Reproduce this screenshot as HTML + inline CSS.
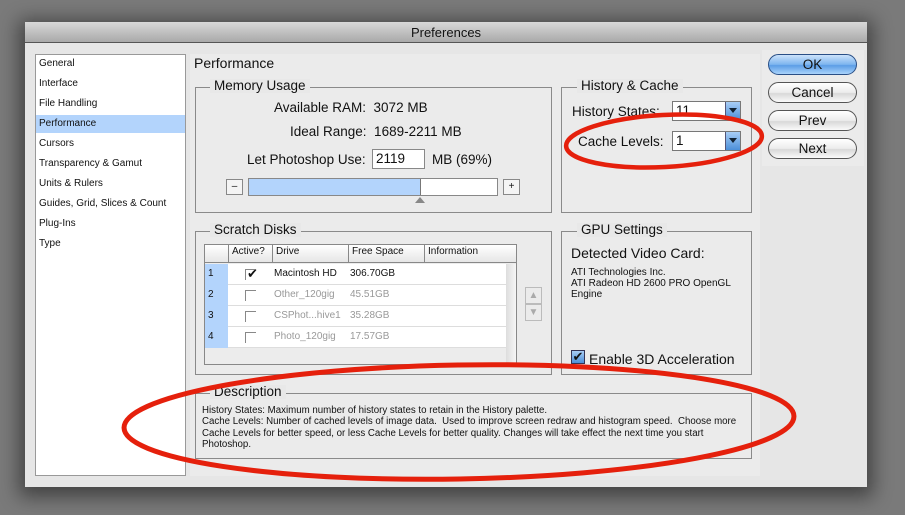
<!DOCTYPE html>
<html><head><meta charset="utf-8"><style>
*{margin:0;padding:0;box-sizing:border-box}
body{width:905px;height:515px;background:#7a7a7a;position:relative;overflow:hidden;font-family:"Liberation Sans","DejaVu Sans",sans-serif;color:#111}
.a{position:absolute}
.win{left:25px;top:22px;width:842px;height:465px;background:#e6e6e6;box-shadow:0 4px 18px 6px rgba(0,0,0,.45)}
.title{left:25px;top:22px;width:842px;height:21px;background:linear-gradient(#d8d8d8,#a9a9a9);border-bottom:1px solid #555;text-align:center;font-size:13px;line-height:21px;color:#111}
.list{left:35px;top:54px;width:151px;height:422px;background:#fff;border:1px solid #999}
.li{position:absolute;left:3px;font-size:10px;width:146px;height:18px;line-height:18px}
.box{position:absolute;border:1px solid #8a8a8a}
.lg{position:absolute;background:#e8e8e8;font-size:13.5px;padding:0 4px;line-height:14px}
.t13{font-size:13.5px;position:absolute;white-space:nowrap}
.t10{font-size:10px;position:absolute;white-space:nowrap}
.btn{position:absolute;left:768px;width:89px;height:21px;border:1px solid #555;border-radius:11px;background:linear-gradient(#fff,#ececec 50%,#d8d8d8 55%,#fafafa);text-align:center;font-size:13.5px;line-height:19px}
.sel{position:absolute;left:672px;width:69px;height:20px;border:1px solid #777;background:#fff;font-size:13.5px;line-height:18px;padding-left:3px}
.sel i{position:absolute;right:0;top:0;width:15px;height:18px;background:linear-gradient(#a8cdf5,#4c8fd9);border-left:1px solid #557}
.sel i:after{content:"";position:absolute;left:3px;top:6px;border:4px solid transparent;border-top:5px solid #123;}
.row{position:absolute;left:205px;width:301px;height:21px;border-bottom:1px solid #ddd;font-size:10px;line-height:20px}
.row b{position:absolute;left:0;width:23px;height:21px;background:#b3d4fc;font-weight:normal;padding-left:3px}
.cb{position:absolute;left:40px;top:5px;width:11px;height:11px;border-left:1px solid #888;border-top:1px solid #888}
</style></head><body>
<div class="a win"></div>
<div class="a title">Preferences</div>
<div class="a" style="left:190px;top:54px;width:570px;height:422px;background:#ebebeb"></div>
<div class="a" style="left:762px;top:50px;width:102px;height:116px;background:#ebebeb"></div>
<div class="a list">
<div class="li" style="top:0">General</div>
<div class="li" style="top:20px">Interface</div>
<div class="li" style="top:40px">File Handling</div>
<div class="li" style="top:60px;left:0;width:149px;padding-left:3px;background:#b3d4fc">Performance</div>
<div class="li" style="top:80px">Cursors</div>
<div class="li" style="top:100px">Transparency &amp; Gamut</div>
<div class="li" style="top:120px">Units &amp; Rulers</div>
<div class="li" style="top:140px">Guides, Grid, Slices &amp; Count</div>
<div class="li" style="top:160px">Plug-Ins</div>
<div class="li" style="top:180px">Type</div>
</div>
<div class="t13" style="left:194px;top:55px;font-size:14px">Performance</div>

<div class="box" style="left:195px;top:87px;width:357px;height:126px"></div>
<div class="lg" style="left:210px;top:79px">Memory Usage</div>
<div class="t13" style="left:274px;top:100px">Available RAM:&nbsp; 3072 MB</div>
<div class="t13" style="left:290px;top:124px">Ideal Range:&nbsp; 1689-2211 MB</div>
<div class="t13" style="left:247px;top:152px">Let Photoshop Use:</div>
<div class="a" style="left:372px;top:149px;width:53px;height:20px;background:#fff;border:1px solid #888;font-size:13.5px;padding-left:3px;line-height:18px">2119</div>
<div class="t13" style="left:432px;top:152px">MB (69%)</div>
<div class="a" style="left:226px;top:179px;width:17px;height:16px;border:1px solid #888;background:#f4f4f4;font-size:10px;text-align:center;line-height:13px">–</div>
<div class="a" style="left:248px;top:178px;width:250px;height:18px;border:1px solid #888;background:#fff"><div style="width:172px;height:16px;background:#b3d4fc;border-right:1px solid #777"></div></div>
<div class="a" style="left:415px;top:197px;border:5px solid transparent;border-bottom:6px solid #888;border-top:0"></div>
<div class="a" style="left:503px;top:179px;width:17px;height:16px;border:1px solid #888;background:#f4f4f4;font-size:10px;text-align:center;line-height:14px">+</div>

<div class="box" style="left:561px;top:87px;width:191px;height:126px"></div>
<div class="lg" style="left:577px;top:79px">History &amp; Cache</div>
<div class="t13" style="left:572px;top:104px">History States:</div>
<div class="sel" style="top:101px">11<i></i></div>
<div class="t13" style="left:578px;top:134px">Cache Levels:</div>
<div class="sel" style="top:131px">1<i></i></div>

<div class="btn" style="top:54px;border-color:#2a4f86;background:linear-gradient(#cde3fb,#7db5ef 50%,#5b9de6 55%,#a9d3fb)">OK</div>
<div class="btn" style="top:82px">Cancel</div>
<div class="btn" style="top:110px">Prev</div>
<div class="btn" style="top:138px">Next</div>

<div class="box" style="left:195px;top:231px;width:357px;height:144px"></div>
<div class="lg" style="left:210px;top:223px">Scratch Disks</div>
<div class="a" style="left:204px;top:244px;width:313px;height:121px;border:1px solid #888;background:#ececec"></div>
<div class="a" style="left:205px;top:245px;width:311px;height:18px;background:linear-gradient(#fff,#e6e6e6);border-bottom:1px solid #888;font-size:10px;line-height:14px">
<span class="a" style="left:23px;top:0;height:17px;border-left:1px solid #888;padding-left:3px">Active?</span>
<span class="a" style="left:67px;top:0;height:17px;border-left:1px solid #888;padding-left:3px">Drive</span>
<span class="a" style="left:143px;top:0;height:17px;border-left:1px solid #888;padding-left:3px">Free Space</span>
<span class="a" style="left:219px;top:0;height:17px;border-left:1px solid #888;padding-left:3px">Information</span>
</div>
<div class="a" style="left:205px;top:264px;width:301px;height:84px;background:#fff"></div>
<div class="a" style="left:506px;top:264px;width:10px;height:100px;background:linear-gradient(90deg,#ddd,#f6f6f6)"></div>
<div class="row" style="top:264px"><b>1</b><span class="cb"></span><span class="a" style="left:42px;top:0px;font-size:13px">✔</span><span class="a" style="left:69px">Macintosh HD</span><span class="a" style="left:145px">306.70GB</span></div>
<div class="row" style="top:285px;color:#999"><b style="color:#111">2</b><span class="cb"></span><span class="a" style="left:69px">Other_120gig</span><span class="a" style="left:145px">45.51GB</span></div>
<div class="row" style="top:306px;color:#999"><b style="color:#111">3</b><span class="cb"></span><span class="a" style="left:69px">CSPhot...hive1</span><span class="a" style="left:145px">35.28GB</span></div>
<div class="row" style="top:327px;color:#999"><b style="color:#111">4</b><span class="cb"></span><span class="a" style="left:69px">Photo_120gig</span><span class="a" style="left:145px">17.57GB</span></div>
<div class="a" style="left:525px;top:287px;width:17px;height:17px;border:1px solid #bbb;color:#aaa;font-size:10px;text-align:center;line-height:15px">▲</div>
<div class="a" style="left:525px;top:304px;width:17px;height:17px;border:1px solid #bbb;color:#aaa;font-size:10px;text-align:center;line-height:15px">▼</div>

<div class="box" style="left:561px;top:231px;width:191px;height:144px"></div>
<div class="lg" style="left:577px;top:223px">GPU Settings</div>
<div class="t13" style="left:571px;top:245px;font-size:14px">Detected Video Card:</div>
<div class="t10" style="left:571px;top:267px;line-height:11px">ATI Technologies Inc.<br>ATI Radeon HD 2600 PRO OpenGL<br>Engine</div>
<div class="a" style="left:571px;top:350px;width:14px;height:14px;border:1px solid #335;background:linear-gradient(#a8cdf5,#4c8fd9);font-size:13px;line-height:12px;text-align:center">✔</div>
<div class="t13" style="left:589px;top:351px;font-size:14px">Enable 3D Acceleration</div>

<div class="box" style="left:195px;top:393px;width:557px;height:66px"></div>
<div class="lg" style="left:210px;top:385px">Description</div>
<div class="t10" style="left:202px;top:405px;font-size:9.7px;line-height:11.3px">History States: Maximum number of history states to retain in the History palette.<br>Cache Levels: Number of cached levels of image data.&nbsp; Used to improve screen redraw and histogram speed.&nbsp; Choose more<br>Cache Levels for better speed, or less Cache Levels for better quality. Changes will take effect the next time you start<br>Photoshop.</div>

<svg class="a" style="left:0;top:0" width="905" height="515">
<ellipse cx="664" cy="141" rx="98" ry="26" fill="none" stroke="#e5200c" stroke-width="4.5" transform="rotate(-3 664 141)"/>
<ellipse cx="459" cy="422" rx="335" ry="57" fill="none" stroke="#e5200c" stroke-width="5" transform="rotate(-1 459 422)"/>
</svg>
</body></html>
